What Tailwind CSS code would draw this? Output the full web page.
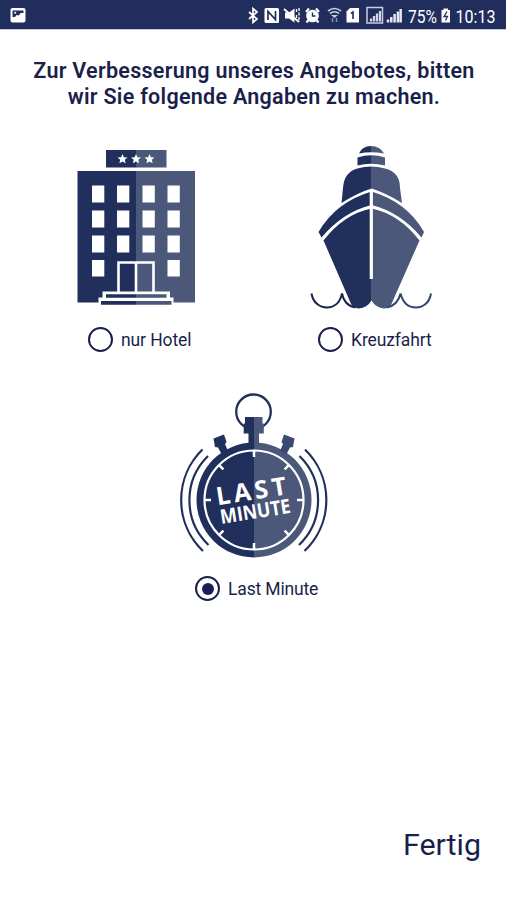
<!DOCTYPE html>
<html lang="de">
<head>
    <meta charset="UTF-8">
    <meta name="viewport" content="width=device-width, initial-scale=1.0">
    <title>Angaben</title>
    <script src="https://cdn.jsdelivr.net/npm/@tailwindcss/browser@4"></script>
</head>
<body class="bg-white text-[#1a1f4b] font-['Roboto',sans-serif]">
  <div class="w-[506px] h-[900px] flex flex-col overflow-hidden">

    <!-- Status bar -->
    <header class="h-[30px] shrink-0 bg-[#212d5c] border-b border-[#c5c8d4] text-white">
      <svg class="w-full h-[29px]" viewBox="0 0 506 29" fill="none">
        <rect x="10.5" y="8" width="15" height="14.5" rx="2" fill="#fff"/>
        <path d="M12.500 10.500h11v2.500h-3l-1.500 2.500-2.500-.5-1.500 2h-2.500z" fill="#212d5c"/>
        <circle cx="15.200" cy="12.800" r="1" fill="#fff"/>
        <!-- bluetooth -->
        <path d="M249 12l8 7-4 3.500V8.500l4 3.500-8 7" stroke="#fff" stroke-width="1.700"/>
        <!-- nfc -->
        <rect x="264.500" y="8" width="14.500" height="15" rx="1.500" fill="#fff"/>
        <path d="M268 20v-8.500l7.500 8V11" stroke="#212d5c" stroke-width="1.700"/>
        <!-- muted speaker -->
        <path d="M285 12.500h4l5.500-4v14l-5.500-4h-4z" fill="#fff"/>
        <path d="M284 9l15 13" stroke="#fff" stroke-width="1.800"/>
        <path d="M296.500 9v4M296.500 15v4M299 8v14" stroke="#fff" stroke-width="1.300" stroke-dasharray="3 1.500"/>
        <!-- alarm -->
        <circle cx="312.500" cy="16" r="6.300" fill="#fff"/>
        <path d="M306 12l3-3.500M316 8.500l3 3.500M308.500 20l-2 2.500M316.500 20l2 2.500" stroke="#fff" stroke-width="2.200"/>
        <path d="M312.500 12.500V16h3" stroke="#212d5c" stroke-width="1.400"/>
        <!-- wifi -->
        <path d="M328 11q6.500-5 13 0M330 13.500q4.500-3.500 9 0" stroke="#c9cde0" stroke-width="1.700"/>
        <path d="M331 15h7l-3.500 3z" fill="#c9cde0"/>
        <path d="M332.500 18v4M336.500 18v4" stroke="#8890b5" stroke-width="1.500"/>
        <!-- sim 1 -->
        <path d="M350 8h9v14.500h-12.500V11.500z" fill="#fff"/>
        <path d="M351 13.500l2-1.500v7" stroke="#212d5c" stroke-width="1.600"/>
        <!-- signal -->
        <rect x="367" y="7.500" width="15.500" height="15.500" stroke="#c9cde0" stroke-width="1.500"/>
        <path d="M371 21.500v-3M374 21.500V16M377 21.500v-8M380 21.500V11" stroke="#d5d8e6" stroke-width="2.300"/>
        <path d="M388 22.500v-3M391.300 22.500V17M394.600 22.500v-8.500M397.900 22.500v-11M400.700 22.500V9" stroke="#e5e7f0" stroke-width="2.500"/>
        <text x="408" y="22.500" font-size="17.500" fill="#fff" textLength="29" lengthAdjust="spacingAndGlyphs">75%</text>
        <!-- battery -->
        <path d="M443.500 8.500h4.500v1.500h2v12.500h-8.500V10h2z" fill="#fff"/>
        <path d="M447 11.500l-3 5h3.500l-2 4" stroke="#212d5c" stroke-width="1.300"/>
        <text x="455.500" y="22.500" font-size="17.500" fill="#fff" textLength="40" lengthAdjust="spacingAndGlyphs">10:13</text>
      </svg>
    </header>

    <main class="flex-1 flex flex-col">
      <h1 class="pt-[28px] pl-[2px] text-center text-[21.500px] leading-[26px] font-semibold text-[#1a1f4b] tracking-[0.28px] whitespace-nowrap">
        Zur Verbesserung unseres Angebotes, bitten<br>wir Sie folgende Angaben zu machen.
      </h1>

      <div class="flex justify-between pl-[66px] pr-[66px] pt-[30px]">
        <!-- Hotel -->
        <svg class="w-[140px] h-[175px]" viewBox="66 140 140 175">
          <path d="M106 150h30.500v17.500H106zM77.500 171h59v131.500h-59z" fill="#212f5c"/>
          <path d="M136 150h30.500v17.500H136zM136 171h59v131.500h-59z" fill="#4b587a"/>
          <g fill="#fff">
            <path id="star" d="M122.500 154l1.400 3.200 3.600.3-2.700 2.300.8 3.400-3.100-1.800-3.100 1.800.8-3.400-2.700-2.300 3.600-.3z"/>
            <use href="#star" x="13.500"/>
            <use href="#star" x="27"/>
            <path d="M92 185.500h12.300v17H92zM117 185.500h12.300v17H117zM142.500 185.500h12.300v17h-12.300zM167.500 185.500h12.300v17h-12.300z"/>
            <path d="M92 210.500h12.300v17H92zM117 210.500h12.300v17H117zM142.500 210.500h12.300v17h-12.300zM167.500 210.500h12.300v17h-12.300z"/>
            <path d="M92 235.500h12.300v17H92zM117 235.500h12.300v17H117zM142.500 235.500h12.300v17h-12.300zM167.500 235.500h12.300v17h-12.300z"/>
            <path d="M92 260h12.300v16.500H92zM167.500 260h12.300v16.500h-12.300z"/>
          </g>
          <path d="M118.500 292v-29.500h35V292M136 262v30" fill="none" stroke="#fff" stroke-width="2.600"/>
          <path d="M102.500 291.500h67.500v6h3.500v6h-75v-6h4z" fill="#fff"/>
          <path d="M106 294.300h30v3.500h-30zM101 301h35v3.700h-35z" fill="#212f5c"/>
          <path d="M136 294.300h30.500v3.500H136zM136 301h35.500v3.700H136z" fill="#4b587a"/>
        </svg>

        <!-- Ship -->
        <svg class="w-[140px] h-[175px]" viewBox="300 140 140 175">
          <defs>
            <linearGradient id="shipFill" gradientUnits="userSpaceOnUse" x1="300" x2="440" y1="0" y2="0">
              <stop offset=".509" stop-color="#212f5c"/>
              <stop offset=".509" stop-color="#4b587a"/>
            </linearGradient>
          </defs>
          <g fill="url(#shipFill)">
            <path d="M359 153.500Q362 146 371 146T384 153.500Q371 151 359 153.500z"/>
            <path d="M357.500 157.500Q371 153 385 157.500V165.500Q371 162 357.500 165.500z"/>
            <path d="M357.500 168.500Q371 164.500 385 168.500Q400 172 400 188L402 203Q386 193 371.500 188.500Q357 193 341.500 203L343 188Q344 172 357.500 168.500z"/>
            <path d="M371.500 191.500Q407 202 424 232L421.500 237.500Q400 212 371.500 205Q343 212 321.500 237.500L318.500 232Q336 202 371.500 191.500z"/>
            <path d="M371.500 208.500Q399 214 419.500 240.500L391 305Q388 308.500 384 308.500Q376 308 371.500 300.500Q367 308 359 308.500Q355 308.500 351.500 305L323.500 240.500Q344 214 371.500 208.500z"/>
          </g>
          <path d="M371.300 191v88" stroke="#fff" stroke-width="3.200"/>
          <path d="M311.500 293.500C313 303 320 307.500 327 307.500S340 303 342 293.500Q344 305 355 307.500" fill="none" stroke="#18234c" stroke-width="2"/>
          <path d="M431 293.500C429.500 303 423 307.500 416 307.500S403 303 400.500 293.500Q398 305 387 307.500" fill="none" stroke="#35456f" stroke-width="2"/>
        </svg>
      </div>

      <div class="flex pl-[88px] text-[17.500px] tracking-[-0.1px] h-[49px] items-center">
        <label class="flex items-center w-[230px] gap-[8px]">
          <span class="size-[25px] rounded-full border-[2.500px] border-[#1a1f4b]"></span>
          <span class="pt-px">nur Hotel</span>
        </label>
        <label class="flex items-center gap-[8px]">
          <span class="size-[25px] rounded-full border-[2.500px] border-[#1a1f4b]"></span>
          <span class="pt-px">Kreuzfahrt</span>
        </label>
      </div>

      <!-- Stopwatch -->
      <div class="pl-[170px] pt-[21px]">
        <svg class="w-[170px] h-[180px]" viewBox="170 385 170 180">
          <defs>
            <linearGradient id="watchFill" gradientUnits="userSpaceOnUse" x1="170" x2="340" y1="0" y2="0">
              <stop offset=".492" stop-color="#212f5c"/>
              <stop offset=".492" stop-color="#4b587a"/>
            </linearGradient>
          </defs>
          <circle cx="253.500" cy="411.800" r="17.300" fill="none" stroke="#212f5c" stroke-width="2.300"/>
          <g fill="url(#watchFill)">
            <path d="M245 417h17.500v6.500h1.300v10h-4.800v10h-10.500v-10h-4.800v-10h1.300z"/>
            <circle cx="254" cy="500" r="57.500"/>
          </g>
          <path d="M213.500 438.500l10.500-4 2.500 7.500-1.500 2 3 7-6.500 3-3.500-6.500-3-.5z" fill="#212f5c"/>
          <path d="M294.500 438.500l-10.500-4-2.500 7.500 1.500 2-3 7 6.500 3 3.500-6.500 3-.5z" fill="#3b4a70"/>
          <circle cx="254" cy="500" r="49.500" fill="none" stroke="#fff" stroke-width="2.200"/>
          <path d="M254 451v6M254 549v-6M205 500h6M303 500h-6M219.400 465.400l4 4M288.600 465.400l-4 4M219.400 534.600l4-4M288.600 534.600l-4-4" stroke="#fff" stroke-width="2.500"/>
          <g fill="none" stroke="#212f5c" stroke-width="2.200">
            <path d="M202.500 449.500A70.500 70.500 0 0 0 203 551M208 456A62 62 0 0 0 208.500 545"/>
            <path d="M305 449.500A70.500 70.500 0 0 1 304.500 551M299.500 456A62 62 0 0 1 299 545"/>
          </g>
          <g transform="rotate(-9 254 500)" fill="#fff" font-family="Open Sans" font-weight="700">
            <text x="217" y="499.500" font-size="25" textLength="71">LAST</text>
            <text x="218" y="518.500" font-size="20" textLength="71" lengthAdjust="spacingAndGlyphs">MINUTE</text>
          </g>
        </svg>
      </div>

      <label class="flex items-center gap-[8px] pl-[195px] h-[47px] text-[17.500px] tracking-[-0.15px]">
        <span class="size-[25px] rounded-full border-[2.500px] border-[#1a1f4b] flex items-center justify-center">
          <span class="size-[12px] rounded-full bg-[#1a1f5b]"></span>
        </span>
        <span class="pt-px">Last Minute</span>
      </label>

      <div class="mt-auto flex justify-end pr-[25px] pb-[35px]">
        <button class="text-[30.400px] leading-[40px]">Fertig</button>
      </div>
    </main>
  </div>
</body>
</html>
